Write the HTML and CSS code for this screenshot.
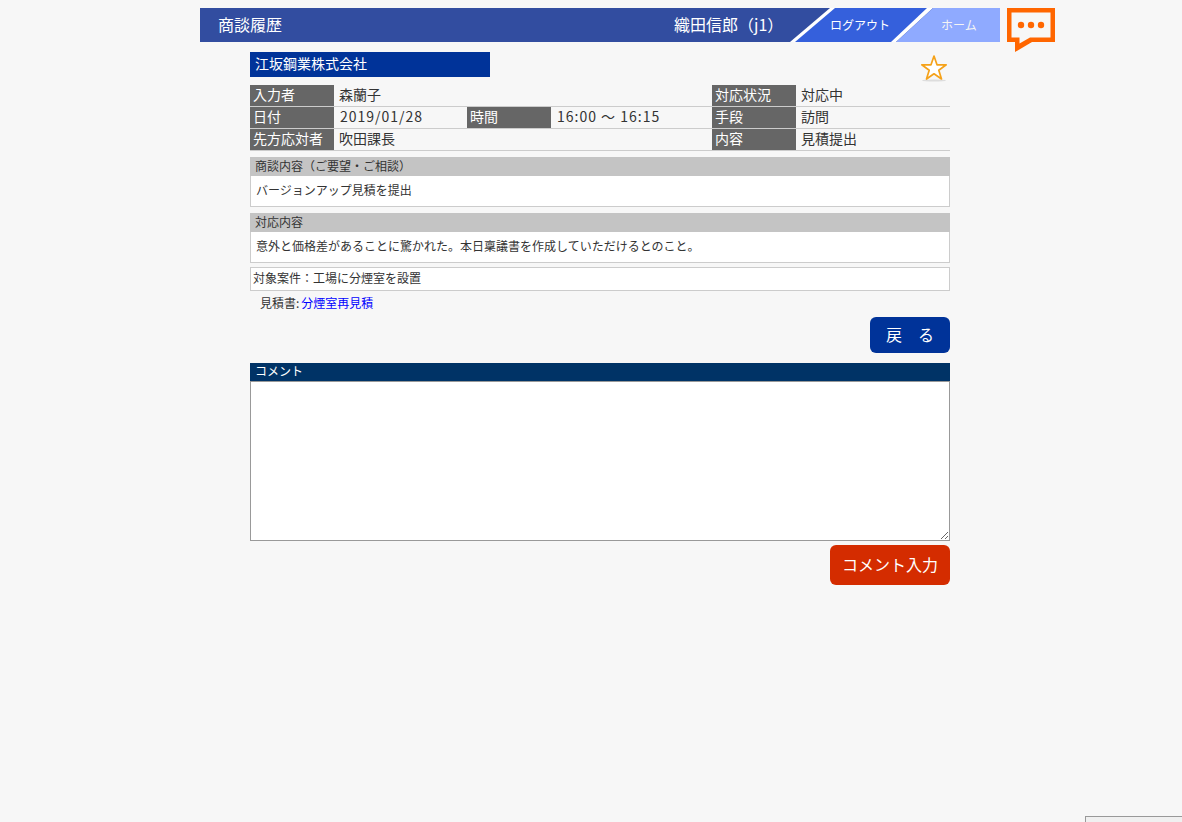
FILE: index.html
```html
<!DOCTYPE html>
<html lang="ja">
<head>
  <meta charset="UTF-8">
  <title>商談履歴</title>
  <link rel="stylesheet" href="styles.css">
</head>
<body>
  <div class="top">
    <header class="head">
      <h1 class="head-title">商談履歴</h1>
      <span class="head-user">織田信郎&#xFF08;j1&#xFF09;</span>
      <nav class="tabs">
        <svg class="tabs-bg" width="210" height="34" viewBox="0 0 210 34">
          <polygon points="0,34 40,0 143,0 106,34" fill="#fff"/>
          <polygon points="5,34 45,0 137,0 101,34" fill="#3560dc"/>
          <polygon points="106,34 143,0 210,0 210,34" fill="#8faaff"/>
        </svg>
        <a class="tab tab-logout" href="#">ログアウト</a>
        <a class="tab tab-home" href="#">ホーム</a>
      </nav>
    </header>
    <svg class="bubble" width="48" height="44" viewBox="0 0 48 44">
      <path fill-rule="evenodd" d="M0 0H48V34H25L8 44V34H0ZM4.500 4.500V29.500H12.500V35.500L23 29.500H43.500V4.500Z" fill="#ff6600"/>
      <circle cx="14" cy="17" r="3.200" fill="#ff6600"/>
      <circle cx="24" cy="17" r="3.200" fill="#ff6600"/>
      <circle cx="34" cy="17" r="3.200" fill="#ff6600"/>
    </svg>
  </div>

  <main class="main">
    <div class="company-row">
      <div class="company">江坂鋼業株式会社</div>
      <svg class="star" width="28" height="28" viewBox="0 0 28 28">
        <ellipse cx="14" cy="26.500" rx="12" ry="1" fill="#ddd"/>
        <path d="M14 2L17 10.800H26.200L18.800 16.300L21.500 25L14 19.800L6.500 25L9.200 16.300L1.800 10.800H11Z" fill="#fff" stroke="#f5a21a" stroke-width="1.700" stroke-linejoin="round"/>
      </svg>
    </div>

    <table class="info">
      <colgroup>
        <col class="col-label">
        <col class="col-date">
        <col class="col-label">
        <col class="col-time">
        <col class="col-label">
        <col>
      </colgroup>
      <tr>
        <th>入力者</th>
        <td colspan="3">森蘭子</td>
        <th>対応状況</th>
        <td>対応中</td>
      </tr>
      <tr>
        <th>日付</th>
        <td class="num">2019/01/28</td>
        <th>時間</th>
        <td class="num">16:00 〜 16:15</td>
        <th>手段</th>
        <td>訪問</td>
      </tr>
      <tr>
        <th>先方応対者</th>
        <td colspan="3">吹田課長</td>
        <th>内容</th>
        <td>見積提出</td>
      </tr>
    </table>

    <section class="block">
      <h2 class="block-head">商談内容&#xFF08;ご要望・ご相談&#xFF09;</h2>
      <p class="block-body">バージョンアップ見積を提出</p>
    </section>

    <section class="block">
      <h2 class="block-head">対応内容</h2>
      <p class="block-body">意外と価格差があることに驚かれた。本日稟議書を作成していただけるとのこと。</p>
    </section>

    <div class="target">対象案件&#xFF1A;工場に分煙室を設置</div>
    <div class="estimate">見積書:<a href="#">分煙室再見積</a></div>

    <div class="actions">
      <button class="btn btn-back" type="button">戻&#x3000;る</button>
    </div>

    <div class="comment-head">コメント</div>
    <textarea class="comment-box"></textarea>

    <div class="actions actions-send">
      <button class="btn btn-send" type="button">コメント入力</button>
    </div>
  </main>

  <div class="corner"></div>
</body>
</html>
```

FILE: styles.css
```css
body {
  margin: 0;
  height: 822px;
  overflow: hidden;
  background-color: #f7f7f7;
  color: #333;
  font-family: "Noto Sans CJK JP", "Noto Sans", sans-serif;
  font-size: 12px;
}
.top {
  display: flex;
  align-items: flex-start;
  gap: 7px;
  height: 34px;
  margin-left: 200px;
  padding-top: 8px;
}
.head {
  display: flex;
  align-items: center;
  width: 800px;
  height: 34px;
  background-color: #324da0;
  color: #fff;
}
.head-title {
  margin: 0 0 2px 18px;
  width: 456px;
  font-size: 16px;
  font-weight: normal;
}
.head-user {
  width: 116px;
  margin-bottom: 2px;
  font-size: 16px;
  white-space: nowrap;
}
.tabs {
  position: relative;
  display: flex;
  width: 210px;
  height: 34px;
}
.tabs-bg {
  position: absolute;
  left: 0;
  top: 0;
}
.tab {
  position: relative;
  color: #fff;
  font-size: 12px;
  line-height: 34px;
  text-decoration: none;
}
.tab-logout {
  margin-left: 40px;
  width: 111px;
}
.tab-home {
  color: #f4f4f4;
}
.bubble {
  display: block;
}
.main {
  width: 700px;
  margin-left: 250px;
}
.company-row {
  display: flex;
  justify-content: space-between;
  height: 33px;
  padding-top: 10px;
}
.company {
  width: 235px;
  height: 25px;
  padding-left: 5px;
  background-color: #003399;
  color: #fff;
  font-size: 14px;
  line-height: 23px;
}
.star {
  margin: 2px 2px 0 0;
}
.info {
  width: 700px;
  table-layout: fixed;
  border-collapse: collapse;
  font-size: 14px;
}
.col-label {
  width: 84px;
}
.col-date {
  width: 133px;
}
.col-time {
  width: 161px;
}
.info th,
.info td {
  height: 21px;
  padding: 0;
  border-bottom: 1px solid #ccc;
  line-height: 19px;
  vertical-align: top;
  white-space: nowrap;
}
.info th {
  padding-left: 3px;
  background-color: #666;
  color: #fff;
  font-weight: normal;
  text-align: left;
}
.info td {
  padding-left: 5px;
}
.info .num {
  padding-left: 6px;
  letter-spacing: 1px;
}
.block {
  margin-top: 6px;
}
.block-head {
  margin: 0;
  height: 19px;
  padding-left: 5px;
  background-color: #c4c4c4;
  font-size: 12px;
  font-weight: normal;
  line-height: 18px;
}
.block-body {
  margin: 0;
  height: 30px;
  padding-left: 5px;
  background-color: #fff;
  border: 1px solid #ccc;
  border-top: none;
  line-height: 28px;
}
.target {
  height: 22px;
  margin-top: 4px;
  padding-left: 2px;
  background-color: #fff;
  border: 1px solid #ccc;
  line-height: 20px;
}
.estimate {
  height: 26px;
  padding-left: 10px;
  line-height: 24px;
}
.estimate a {
  margin-left: 2px;
  color: #0000ff;
  text-decoration: none;
}
.actions {
  display: flex;
  justify-content: flex-end;
}
.actions-send {
  margin-top: 4px;
}
.btn {
  border: none;
  border-radius: 6px;
  color: #fff;
  font-family: inherit;
  font-size: 16px;
  padding: 0 0 3px;
}
.btn-back {
  width: 80px;
  height: 36px;
  background-color: #003399;
}
.btn-send {
  width: 120px;
  height: 40px;
  background-color: #d42c00;
}
.comment-head {
  height: 18px;
  margin-top: 10px;
  padding-left: 5px;
  background-color: #003366;
  color: #fff;
  line-height: 16px;
}
.comment-box {
  display: block;
  box-sizing: border-box;
  width: 700px;
  height: 160px;
  margin: 0;
  padding: 2px;
  background-color: #fff;
  border: 1px solid #999;
}
.corner {
  position: fixed;
  left: 1085px;
  top: 816px;
  width: 97px;
  height: 6px;
  background-color: #f0f0f0;
  border-top: 1px solid #999;
  border-left: 1px solid #999;
}
```
